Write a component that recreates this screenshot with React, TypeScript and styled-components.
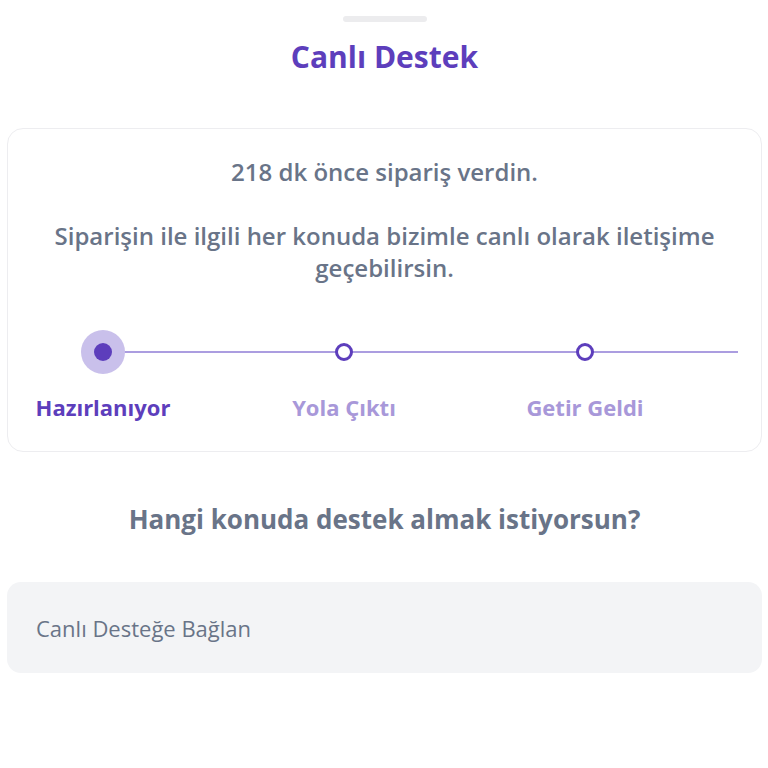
import React from 'react';
import styled, { createGlobalStyle } from 'styled-components';

const GlobalStyle = createGlobalStyle`
  html, body {
    margin: 0;
    padding: 0;
    background: #ffffff;
  }
  body {
    font-family: 'Open Sans', 'Noto Sans', sans-serif;
    -webkit-font-smoothing: antialiased;
  }
`;

const purple = '#5d3ebc';
const gray = '#697488';

const Page = styled.div`
  width: 768px;
  height: 768px;
  box-sizing: border-box;
  padding: 16px 6px 0 7px;
  display: flex;
  flex-direction: column;
  align-items: center;
`;

const Handle = styled.div`
  width: 84px;
  height: 6px;
  border-radius: 3px;
  background: #ececee;
`;

const Title = styled.h1`
  margin: 16px 0 0;
  font-size: 30px;
  line-height: 38px;
  font-weight: 700;
  color: ${purple};
`;

const Card = styled.div`
  margin-top: 52px;
  width: 100%;
  box-sizing: border-box;
  border: 1px solid #ededf0;
  border-radius: 16px;
  padding: 27px 25px 30px;
  display: flex;
  flex-direction: column;
  align-items: center;
`;

const Text = styled.p`
  margin: 0;
  font-size: 24px;
  line-height: 32px;
  font-weight: 600;
  color: ${gray};
  text-align: center;
`;

const Paragraph = styled(Text)`
  margin-top: 32px;
  padding: 0 4px;
`;

const Stepper = styled.div`
  position: relative;
  align-self: stretch;
  margin-top: 44px;
  display: grid;
  grid-template-columns: repeat(3, 140px);
  column-gap: 101px;

  &::before {
    content: '';
    position: absolute;
    top: 23px;
    left: 70px;
    right: -2px;
    height: 2px;
    background: #ab9de0;
  }
`;

const Step = styled.div`
  position: relative;
  display: flex;
  flex-direction: column;
  align-items: center;
`;

const DotBox = styled.div`
  width: 48px;
  height: 48px;
  display: flex;
  align-items: center;
  justify-content: center;
`;

const Halo = styled.div`
  width: 44px;
  height: 44px;
  border-radius: 50%;
  background: #c9c0eb;
  display: flex;
  align-items: center;
  justify-content: center;
`;

const Dot = styled.div`
  width: 18px;
  height: 18px;
  border-radius: 50%;
  background: ${purple};
`;

const Ring = styled.div`
  width: 12px;
  height: 12px;
  border-radius: 50%;
  border: 3px solid ${purple};
  background: #ffffff;
`;

const StepLabel = styled.span<{ $active?: boolean }>`
  margin-top: 17px;
  font-size: 22px;
  line-height: 28px;
  font-weight: 700;
  white-space: nowrap;
  color: ${({ $active }) => ($active ? purple : '#a898d9')};
`;

const Question = styled.h2`
  margin: 51px 0 0;
  font-size: 26px;
  line-height: 32px;
  font-weight: 700;
  color: ${gray};
`;

const Option = styled.button`
  margin-top: 47px;
  width: 100%;
  height: 91px;
  box-sizing: border-box;
  border: none;
  border-radius: 14px;
  background: #f3f4f6;
  padding: 0 29px;
  text-align: left;
  font-family: inherit;
  font-size: 22px;
  font-weight: 400;
  color: ${gray};
  cursor: pointer;
`;

const steps = [
  { label: 'Hazırlanıyor', active: true },
  { label: 'Yola Çıktı', active: false },
  { label: 'Getir Geldi', active: false },
];

const App = () => {
  return (
    <>
      <GlobalStyle />
      <Page>
        <Handle />
        <Title>Canlı Destek</Title>
        <Card>
          <Text>218 dk önce sipariş verdin.</Text>
          <Paragraph>
            Siparişin ile ilgili her konuda bizimle canlı olarak iletişime
            geçebilirsin.
          </Paragraph>
          <Stepper>
            {steps.map((s) => (
              <Step key={s.label}>
                <DotBox>
                  {s.active ? (
                    <Halo>
                      <Dot />
                    </Halo>
                  ) : (
                    <Ring />
                  )}
                </DotBox>
                <StepLabel $active={s.active}>{s.label}</StepLabel>
              </Step>
            ))}
          </Stepper>
        </Card>
        <Question>Hangi konuda destek almak istiyorsun?</Question>
        <Option>Canlı Desteğe Bağlan</Option>
      </Page>
    </>
  );
};

export default App;
